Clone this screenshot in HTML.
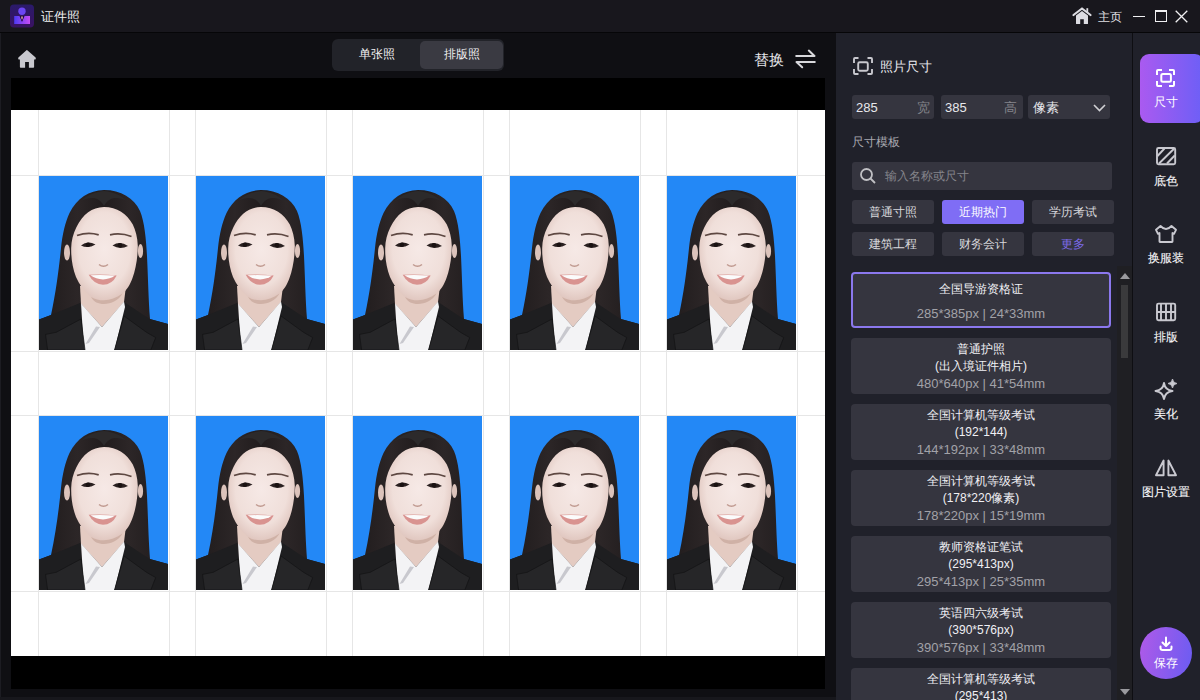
<!DOCTYPE html>
<html><head><meta charset="utf-8">
<style>
*{box-sizing:border-box;margin:0;padding:0}
html,body{width:1200px;height:700px;overflow:hidden;background:#111116;font-family:"Liberation Sans",sans-serif;color:#e6e6ea}
.abs{position:absolute}
#title{left:0;top:0;width:1200px;height:33px;background:#18171d;border-bottom:1px solid #060608}
#main{left:0;top:33px;width:836px;height:667px;background:#0f0f13;border-left:1px solid #1c1c22}
#panel{left:836px;top:33px;width:296px;height:667px;background:#20212a}
#side{left:1132px;top:33px;width:68px;height:667px;background:#20212a;border-left:1px solid #0e0e12}
.t{position:absolute;white-space:nowrap;line-height:1}
.inp{position:absolute;background:#35353f;border-radius:3px}
.tag{position:absolute;background:#35353f;border-radius:3px;width:82px;height:24px;font-size:12px;color:#d8d8dc;text-align:center;line-height:24px}
.card{position:absolute;left:851px;width:260px;height:56px;background:#35353f;border-radius:4px;text-align:center;font-size:12px;line-height:17px;color:#f0f0f4}
.card .s{color:#a2a2a8;font-size:13px}
.sb{position:absolute;left:1132px;width:67px;text-align:center;font-size:12px;color:#f6f6f8;-webkit-text-stroke:0.12px #f6f6f8}
</style></head><body>
<div id="title" class="abs"></div>
<div id="main" class="abs"></div>
<div id="panel" class="abs"></div>
<div id="side" class="abs"></div>

<svg class="abs" style="left:10px;top:4px" width="24" height="24" viewBox="0 0 24 24">
<defs><linearGradient id="ig" x1="0" x2="1"><stop offset="0" stop-color="#4d3af2"/><stop offset="1" stop-color="#c84cf6"/></linearGradient>
<linearGradient id="ibg" x1="0" y1="0" x2="0" y2="1"><stop offset="0" stop-color="#2a1a6a"/><stop offset="1" stop-color="#3a1262"/></linearGradient></defs>
<rect x="0" y="0.5" width="24" height="23" rx="4" fill="url(#ibg)"/>
<circle cx="12" cy="7.2" r="3.7" fill="#6c46f4"/>
<path d="M4.2 12 H9.6 L12 17.8 L14.4 12 H20 V20 H4.2 Z" fill="url(#ig)"/>
<path d="M9.6 12 L12 17.8 L14.4 12 Z" fill="#1e0c40"/>
<path d="M11.2 12.6 L12.8 12.6 L12.5 15 L12 15.8 L11.5 15Z" fill="#f4b4b4"/>
</svg>
<div class="t" style="left:41px;top:10px;font-size:13px;color:#f0f0f2">证件照</div>

<svg class="abs" style="left:1065px;top:2px" width="30" height="28" viewBox="1065 2 30 28">
<path d="M1073.5 15 L1082 8.5 L1090.5 15" stroke="#dcdce2" stroke-width="2.2" fill="none" stroke-linecap="round" stroke-linejoin="round"/>
<rect x="1086.4" y="8.2" width="1.8" height="4.5" fill="#dcdce2"/>
<path d="M1076 15.5 L1082 11 L1088 15.5 V23.5 Q1088 24 1087.5 24 H1083.8 V19.3 H1080.2 V24 H1076.5 Q1076 24 1076 23.5 Z" fill="#dcdce2"/>
</svg>
<div class="t" style="left:1098px;top:11px;font-size:12px;color:#e0e0e4">主页</div>
<div class="abs" style="left:1133px;top:15.5px;width:12px;height:1.5px;background:#f0f0f2"></div>
<div class="abs" style="left:1155px;top:10px;width:12px;height:12px;border:1.3px solid #f0f0f2;border-top-width:2.3px"></div>
<svg class="abs" style="left:1175px;top:10px" width="13" height="13" viewBox="0 0 13 13"><path d="M0.7 0.7 L12.3 12.3 M12.3 0.7 L0.7 12.3" stroke="#f0f0f2" stroke-width="1.3"/></svg>

<svg class="abs" style="left:12px;top:44px" width="30" height="30" viewBox="12 44 30 30">
<path d="M26.8 50 Q27.2 50 27.6 50.4 L35.6 57.6 Q36.2 58.4 35.4 59.6 L34.1 59.6 L34.1 67 Q34.1 67.8 33.3 67.8 L28.9 67.8 L28.9 62 L25.1 62 L25.1 67.8 L20.7 67.8 Q19.9 67.8 19.9 67 L19.9 59.6 L18.6 59.6 Q17.8 58.4 18.4 57.6 L26.2 50.4 Q26.5 50 26.8 50Z" fill="#c8c8ce"/>
</svg>
<div class="abs" style="left:332px;top:39px;width:172px;height:32px;background:#222329;border-radius:6px"></div>
<div class="abs" style="left:420px;top:41px;width:83px;height:28px;background:#3a3a42;border-radius:5px"></div>
<div class="t" style="left:359px;top:48px;font-size:12px;color:#f2f2f4">单张照</div>
<div class="t" style="left:444px;top:48px;font-size:12px;color:#f2f2f4">排版照</div>
<div class="t" style="left:754px;top:52px;font-size:15px;color:#e8e8ec">替换</div>
<svg class="abs" style="left:790px;top:44px" width="32" height="30" viewBox="790 44 32 30">
<path d="M796.2 56 H814.5 L808.8 50.6 M814.8 62 H796.5 L802.2 67.3" stroke="#d8d8dc" stroke-width="2" fill="none" stroke-linecap="round" stroke-linejoin="round"/>
</svg>

<div class="abs" style="left:11px;top:78px;width:814px;height:611px;background:#000"></div>
<div class="abs" style="left:0;top:697px;width:836px;height:3px;background:#17171c"></div>
<div id="sheet" class="abs" style="left:11px;top:110px;width:814px;height:546px;background:#fff;overflow:hidden"><svg width="814" height="546" viewBox="0 0 814 546"><defs><radialGradient id="fg" cx="0.5" cy="0.45" r="0.6"><stop offset="0" stop-color="#f6e9e6"/><stop offset="0.65" stop-color="#f0dfda"/><stop offset="1" stop-color="#dcc0b8"/></radialGradient>
<linearGradient id="hg" x1="0" x2="1"><stop offset="0" stop-color="#1e1a1b"/><stop offset="0.3" stop-color="#2c2627"/><stop offset="0.5" stop-color="#211c1d"/><stop offset="0.7" stop-color="#2c2627"/><stop offset="1" stop-color="#1e1a1b"/></linearGradient>
<symbol id="ph" viewBox="0 0 129 174">
<rect width="129" height="174" fill="#2388f6"/>
<path d="M65 14 C50 14.5 38 22 30.5 37 C26 47 23.5 58 22 72 C20 92 17 116 12 139 L0 143.5 L0 174 L129 174 L129 148 L111 143 C109.5 124 109 100 108 80 C107 62 105.5 46 101 35 C95 22 82 14 65 14 Z" fill="url(#hg)"/>
<path d="M65 15 C57 15.5 48 19 42 25 C52 20 60 21 65 30 C70 21 78 20 88 25 C82 19 73 15.5 65 15Z" fill="#2c2a2b"/>
<ellipse cx="28" cy="76.5" rx="3" ry="8" fill="#dcc3bb"/>
<ellipse cx="101.5" cy="75" rx="2.6" ry="7" fill="#dcc3bb"/>
<path d="M41 110 L87 110 L85 126 L63 151 L42 128 Z" fill="#e4cbc2"/>
<path d="M65 31 C53 31.5 44 38 37.5 51 C34 58 32.3 65 32.2 72 C32 82 33.5 92 37 101 C40 108 45 115 52 121 C56 123.5 60 124.3 65 124.3 C71 124.3 77 122 83.5 117.5 C88 113.5 91 109 93.5 102 C96.5 94 98.8 82 98.8 70 C98.5 61 96.5 54 93.8 48.5 C88 38 78 31 65 31 Z" fill="url(#fg)"/>
<path d="M52 121 C56 123.5 60 124.3 65 124.3 C71 124.3 77 122 83.5 117.5 C80 124 72 128 65 128 C59 128 55 126 52 121Z" fill="#cfb1a6"/>
<path d="M38 59.5 Q49 55.5 59.7 58.8" stroke="#5e4842" stroke-width="1.8" fill="none"/>
<path d="M71 58.8 Q82 56.5 92.5 60.5" stroke="#5e4842" stroke-width="1.8" fill="none"/>
<path d="M42 69.5 Q48.5 64 56.5 68.5 Q49 73 42 69.5Z" fill="#2a2020"/><circle cx="49" cy="68.8" r="2.3" fill="#1a1212"/>
<path d="M73.5 69.5 Q81 64.5 89 70 Q81 74 73.5 69.5Z" fill="#2a2020"/><circle cx="81" cy="69.3" r="2.3" fill="#1a1212"/>
<path d="M60 88.5 Q64.5 92 69 88.5" stroke="#c09a90" stroke-width="1.5" fill="none"/>
<path d="M49.7 98.8 Q64 98 77.7 99.4 Q73 108.7 64 108.7 Q55 108.7 49.7 98.8Z" fill="#d99390"/>
<path d="M51.5 99.3 Q64 98.8 76 99.6 Q71 103.4 64 103.4 Q57 103.4 51.5 99.3Z" fill="#fbfbfb"/>
<path d="M0 143.5 L12 139 L41 127 L46 174 L0 174 Z" fill="#1e1e20"/>
<path d="M129 148 L110.6 143 L85 126 L75.5 174 L129 174 Z" fill="#1e1e20"/>
<path d="M42 127.5 L63 151 L85 125.5 L86 131 L75.5 174 L45 174 Z" fill="#f3f3f5"/>
<path d="M57 150.5 L61 151 L50 167 L46.5 168Z" fill="#c8c8ce"/>
<path d="M42 143 L17.2 156.3 L6.5 158.4 L8.6 174 L46 174 Z" fill="#262628" stroke="#121214" stroke-width="0.7"/>
<path d="M85 140 L107.5 156.3 L116.7 161.6 L111.8 174 L75.5 174 Z" fill="#262628" stroke="#121214" stroke-width="0.7"/>
</symbol></defs><rect x="27" y="0" width="1" height="546" fill="#e6e6e6"/><rect x="158" y="0" width="1" height="546" fill="#e6e6e6"/><rect x="184" y="0" width="1" height="546" fill="#e6e6e6"/><rect x="315" y="0" width="1" height="546" fill="#e6e6e6"/><rect x="341" y="0" width="1" height="546" fill="#e6e6e6"/><rect x="472" y="0" width="1" height="546" fill="#e6e6e6"/><rect x="498" y="0" width="1" height="546" fill="#e6e6e6"/><rect x="629" y="0" width="1" height="546" fill="#e6e6e6"/><rect x="655" y="0" width="1" height="546" fill="#e6e6e6"/><rect x="786" y="0" width="1" height="546" fill="#e6e6e6"/><rect x="0" y="65" width="814" height="1" fill="#e6e6e6"/><rect x="0" y="241" width="814" height="1" fill="#e6e6e6"/><rect x="0" y="305" width="814" height="1" fill="#e6e6e6"/><rect x="0" y="481" width="814" height="1" fill="#e6e6e6"/><use href="#ph" x="28" y="66" width="129" height="174"/><use href="#ph" x="185" y="66" width="129" height="174"/><use href="#ph" x="342" y="66" width="129" height="174"/><use href="#ph" x="499" y="66" width="129" height="174"/><use href="#ph" x="656" y="66" width="129" height="174"/><use href="#ph" x="28" y="306" width="129" height="174"/><use href="#ph" x="185" y="306" width="129" height="174"/><use href="#ph" x="342" y="306" width="129" height="174"/><use href="#ph" x="499" y="306" width="129" height="174"/><use href="#ph" x="656" y="306" width="129" height="174"/></svg></div>

<svg class="abs" style="left:848px;top:52px" width="30" height="28" viewBox="848 52 30 28">
<path d="M854 63 V59 Q854 58 855 58 H858.5 M867.5 58 H871 Q872 58 872 59 V63 M872 69 V73 Q872 74 871 74 H867.5 M858.5 74 H855 Q854 74 854 73 V69" stroke="#c8c8ce" stroke-width="1.9" fill="none"/>
<rect x="858.2" y="62.2" width="9.6" height="8.6" rx="1.5" stroke="#c8c8ce" stroke-width="1.9" fill="none"/>
</svg>
<div class="t" style="left:880px;top:59.5px;font-size:13px;color:#ececf0">照片尺寸</div>

<div class="inp" style="left:852px;top:95px;width:82px;height:24px"></div>
<div class="t" style="left:856px;top:101px;font-size:13px;color:#e8e8ec">285</div>
<div class="t" style="left:917px;top:101px;font-size:13px;color:#85858c">宽</div>
<div class="inp" style="left:941px;top:95px;width:82px;height:24px"></div>
<div class="t" style="left:945px;top:101px;font-size:13px;color:#e8e8ec">385</div>
<div class="t" style="left:1004px;top:101px;font-size:13px;color:#85858c">高</div>
<div class="inp" style="left:1028px;top:95px;width:82px;height:24px"></div>
<div class="t" style="left:1033px;top:101px;font-size:13px;color:#e8e8ec">像素</div>
<svg class="abs" style="left:1093px;top:104px" width="13" height="8" viewBox="0 0 13 8"><path d="M1 1 L6.5 6.5 L12 1" stroke="#d0d0d4" stroke-width="1.6" fill="none"/></svg>

<div class="t" style="left:852px;top:136px;font-size:12px;color:#a8a8b0">尺寸模板</div>
<div class="inp" style="left:852px;top:162px;width:260px;height:28px"></div>
<svg class="abs" style="left:859px;top:167px" width="18" height="18" viewBox="0 0 18 18"><circle cx="7.5" cy="7.5" r="5.5" stroke="#c0c0c4" stroke-width="1.8" fill="none"/><path d="M11.5 11.5 L16 16" stroke="#c0c0c4" stroke-width="1.8"/></svg>
<div class="t" style="left:885px;top:170px;font-size:12px;color:#85858c">输入名称或尺寸</div>

<div class="tag" style="left:852px;top:200px">普通寸照</div>
<div class="tag" style="left:942px;top:200px;background:#7f6df5;color:#fff">近期热门</div>
<div class="tag" style="left:1032px;top:200px">学历考试</div>
<div class="tag" style="left:852px;top:232px">建筑工程</div>
<div class="tag" style="left:942px;top:232px">财务会计</div>
<div class="tag" style="left:1032px;top:232px;color:#7d6bea">更多</div>

<div class="card" style="top:272px;border:2px solid #8b78ee"><div style="position:absolute;left:0;right:0;top:6.5px">全国导游资格证</div><div class="s" style="position:absolute;left:0;right:0;top:30.5px">285*385px | 24*33mm</div></div>
<div class="card" style="top:338px;padding-top:2.5px"><div>普通护照</div><div>(出入境证件相片)</div><div class="s">480*640px | 41*54mm</div></div>
<div class="card" style="top:404px;padding-top:2.5px"><div>全国计算机等级考试</div><div>(192*144)</div><div class="s">144*192px | 33*48mm</div></div>
<div class="card" style="top:470px;padding-top:2.5px"><div>全国计算机等级考试</div><div>(178*220像素)</div><div class="s">178*220px | 15*19mm</div></div>
<div class="card" style="top:536px;padding-top:2.5px"><div>教师资格证笔试</div><div>(295*413px)</div><div class="s">295*413px | 25*35mm</div></div>
<div class="card" style="top:602px;padding-top:2.5px"><div>英语四六级考试</div><div>(390*576px)</div><div class="s">390*576px | 33*48mm</div></div>
<div class="card" style="top:668px;padding-top:2.5px"><div>全国计算机等级考试</div><div>(295*413)</div><div class="s">295*413px | 25*35mm</div></div>

<div class="abs" style="left:1117px;top:266px;width:15px;height:434px;background:#1f1f23"></div>
<svg class="abs" style="left:1120px;top:273px" width="10" height="6" viewBox="0 0 10 6"><path d="M0 6 L5 0 L10 6Z" fill="#9a9a9e"/></svg>
<div class="abs" style="left:1121px;top:285px;width:7px;height:73px;background:#3a3a3c"></div>
<svg class="abs" style="left:1120px;top:689px" width="10" height="6" viewBox="0 0 10 6"><path d="M0 0 L5 6 L10 0Z" fill="#9a9a9e"/></svg>


<div class="abs" style="left:1140px;top:54px;width:64px;height:69px;border-radius:9px;background:linear-gradient(90deg,#aa5af0,#6c5ff6)"></div>
<svg class="abs" style="left:1150px;top:62px" width="35" height="30" viewBox="1150 62 35 30">
<path d="M1157 75 V71 Q1157 70 1158 70 H1162 M1169 70 H1173 Q1174 70 1174 71 V75 M1174 81 V85 Q1174 86 1173 86 H1169 M1162 86 H1158 Q1157 86 1157 85 V81" stroke="#fff" stroke-width="2" fill="none"/>
<rect x="1161.3" y="74.1" width="9.6" height="7.7" rx="1.5" stroke="#fff" stroke-width="2" fill="none"/>
</svg>
<div class="sb t" style="top:96px;left:1140px;width:52px;color:#fff;-webkit-text-stroke:0">尺寸</div>

<svg class="abs" style="left:1150px;top:140px" width="35" height="30" viewBox="1150 140 35 30">
<rect x="1157" y="148" width="18.2" height="16.2" rx="1.5" stroke="#c9c9d0" stroke-width="1.9" fill="none"/>
<path d="M1157.5 156 L1164.5 148.5 M1159 163.5 L1174 148.8 M1167 163.5 L1174.7 155.5" stroke="#c9c9d0" stroke-width="1.9"/>
</svg>
<div class="sb t" style="top:175px">底色</div>

<svg class="abs" style="left:1150px;top:218px" width="35" height="30" viewBox="1150 218 35 30">
<path d="M1160.5 226 Q1166 232 1171.5 226 L1176 229.8 L1174 233.8 L1172.5 233 L1172.5 241.5 Q1172.5 242 1172 242 L1160 242 Q1159.5 242 1159.5 241.5 L1159.5 233 L1158 233.8 L1156 229.8 Z" stroke="#c9c9d0" stroke-width="1.9" fill="none" stroke-linejoin="round"/>
</svg>
<div class="sb t" style="top:252px">换服装</div>

<svg class="abs" style="left:1150px;top:295px" width="35" height="30" viewBox="1150 295 35 30">
<rect x="1157" y="303.6" width="18.2" height="16.6" rx="1.5" stroke="#c9c9d0" stroke-width="1.9" fill="none"/>
<path d="M1157 312 H1175 M1161 303.6 V320 M1166 303.6 V320 M1171 303.6 V320" stroke="#c9c9d0" stroke-width="1.9"/>
</svg>
<div class="sb t" style="top:331px">排版</div>

<svg class="abs" style="left:1150px;top:373px" width="35" height="30" viewBox="1150 373 35 30">
<path d="M1164 383 Q1165 390 1172.5 391 Q1165 392 1164 399 Q1163 392 1155.5 391 Q1163 390 1164 383Z" stroke="#c9c9d0" stroke-width="1.9" fill="none" stroke-linejoin="round"/>
<path d="M1172.5 379 Q1173 383 1177 383.5 Q1173 384 1172.5 388 Q1172 384 1168 383.5 Q1172 383 1172.5 379Z" fill="#c9c9d0" stroke="#c9c9d0" stroke-width="0.8"/>
</svg>
<div class="sb t" style="top:408px">美化</div>

<svg class="abs" style="left:1150px;top:452px" width="35" height="30" viewBox="1150 452 35 30">
<path d="M1163.6 460.5 L1163.6 475.3 L1156 475.3 Z M1168.4 460.5 L1168.4 475.3 L1176 475.3 Z" stroke="#c9c9d0" stroke-width="1.9" fill="none" stroke-linejoin="round"/>
</svg>
<div class="sb t" style="top:486px">图片设置</div>

<div class="abs" style="left:1140px;top:627px;width:52px;height:52px;border-radius:50%;background:linear-gradient(100deg,#b05ae8,#6a5cf2)"></div>
<svg class="abs" style="left:1150px;top:630px" width="35" height="30" viewBox="1150 630 35 30">
<path d="M1166 637.5 V645.5 M1162.5 642.5 L1166 646 L1169.5 642.5" stroke="#fff" stroke-width="2" fill="none" stroke-linecap="round" stroke-linejoin="round"/>
<path d="M1160.5 646.5 V648 Q1160.5 650 1162.5 650 H1169.5 Q1171.5 650 1171.5 648 V646.5" stroke="#fff" stroke-width="2" fill="none" stroke-linecap="round"/>
</svg>
<div class="sb t" style="top:657px;left:1140px;width:52px;color:#fff;-webkit-text-stroke:0">保存</div>

</body></html>
